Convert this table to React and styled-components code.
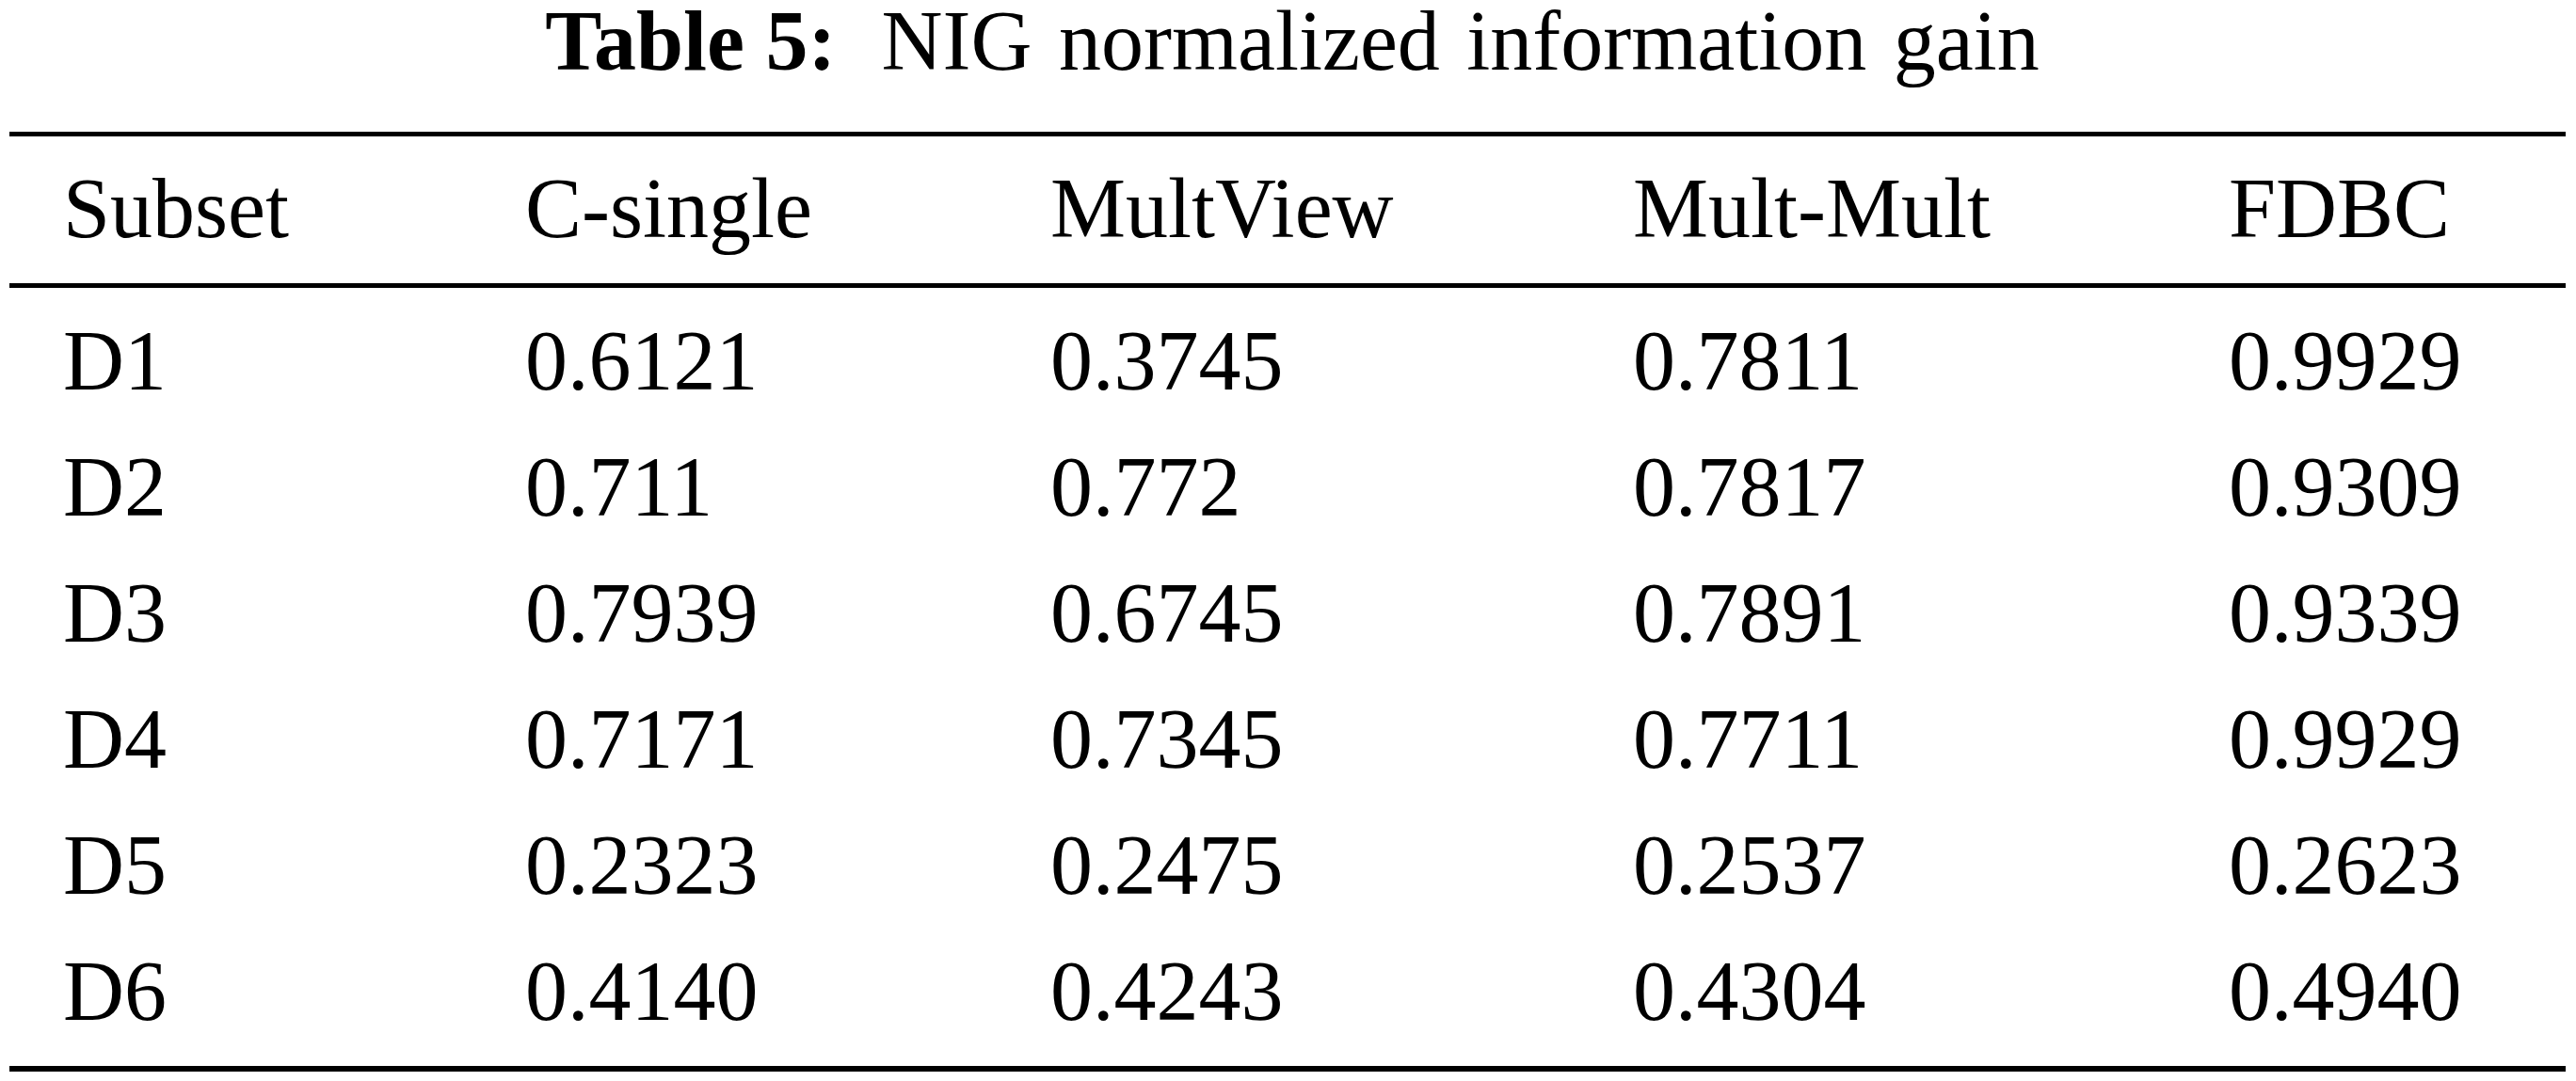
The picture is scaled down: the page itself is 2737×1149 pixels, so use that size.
import React from 'react';
import styled, { createGlobalStyle } from 'styled-components';

const GlobalStyle = createGlobalStyle`
  html, body {
    margin: 0;
    padding: 0;
    background: #ffffff;
  }
  body {
    font-family: "Liberation Serif", "Times New Roman", serif;
    color: #000000;
  }
`;

const Page = styled.div`
  width: 2737px;
  box-sizing: border-box;
  padding: 0 11px 0 10px;
`;

const Caption = styled.div`
  font-size: 90px;
  line-height: 88px;
  text-align: center;
  word-spacing: 6px;
  margin-bottom: 52px;
  padding-left: 10px;
`;

const CaptionLabel = styled.span`
  font-weight: bold;
  word-spacing: 0;
  margin-right: 48px;
`;

const Table = styled.div`
  border-top: 5px solid #000;
  border-bottom: 6px solid #000;
`;

const Head = styled.div`
  border-bottom: 5px solid #000;
  padding: 10px 0 12px;
`;

const Body = styled.div`
  padding: 11px 0 12px;
`;

const Row = styled.div`
  display: grid;
  grid-template-columns: 491px 558px 619px 633px 1fr;
  padding-left: 57px;
  font-size: 90px;
  line-height: 134px;
  white-space: nowrap;
`;

const Cell = styled.div`
  text-align: left;
`;

const columns = ['Subset', 'C-single', 'MultView', 'Mult-Mult', 'FDBC'];

const rows = [
  ['D1', '0.6121', '0.3745', '0.7811', '0.9929'],
  ['D2', '0.711', '0.772', '0.7817', '0.9309'],
  ['D3', '0.7939', '0.6745', '0.7891', '0.9339'],
  ['D4', '0.7171', '0.7345', '0.7711', '0.9929'],
  ['D5', '0.2323', '0.2475', '0.2537', '0.2623'],
  ['D6', '0.4140', '0.4243', '0.4304', '0.4940'],
];

const App = () => {
  return (
    <Page>
      <GlobalStyle />
      <Caption>
        <CaptionLabel>Table 5:</CaptionLabel>
        NIG normalized information gain
      </Caption>
      <Table>
        <Head>
          <Row>
            {columns.map((c) => (
              <Cell key={c}>{c}</Cell>
            ))}
          </Row>
        </Head>
        <Body>
          {rows.map((r) => (
            <Row key={r[0]}>
              {r.map((v, i) => (
                <Cell key={i}>{v}</Cell>
              ))}
            </Row>
          ))}
        </Body>
      </Table>
    </Page>
  );
};

export default App;
